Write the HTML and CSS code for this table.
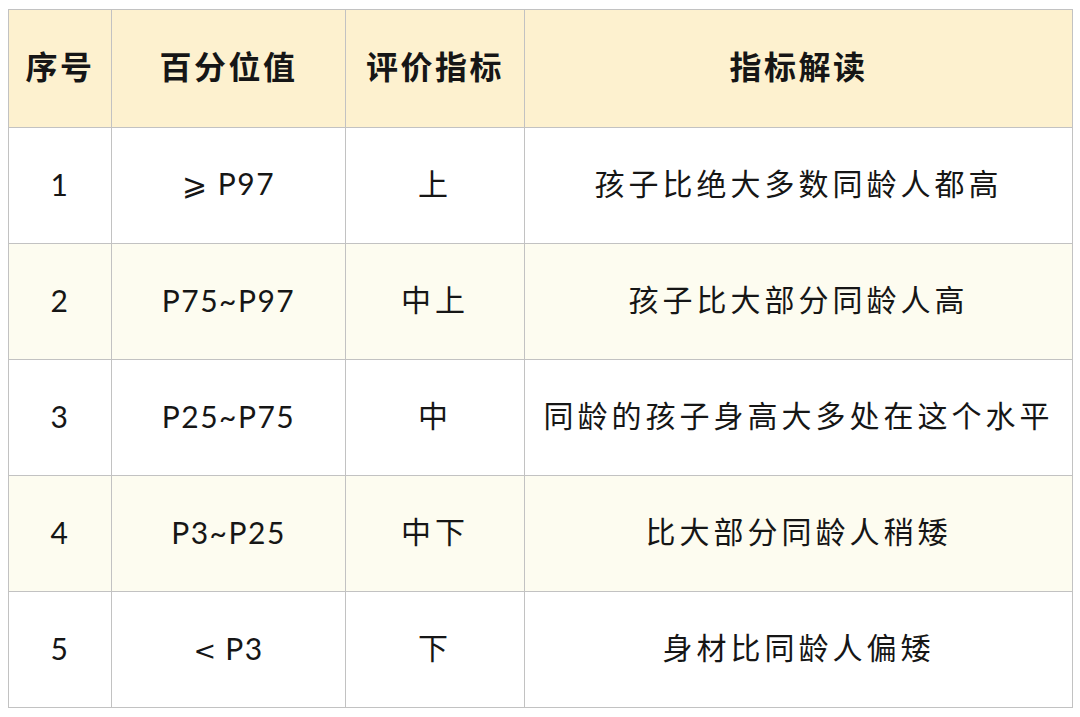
FILE: index.html
```html
<!DOCTYPE html>
<html lang="zh-CN">
<head>
<meta charset="utf-8">
<title>身高百分位</title>
<link rel="stylesheet" href="styles.css">
</head>
<body>
<table class="grid">
  <colgroup>
    <col class="c1"><col class="c2"><col class="c3"><col class="c4">
  </colgroup>
  <thead>
    <tr class="head">
      <th>序号</th><th>百分位值</th><th>评价指标</th><th>指标解读</th>
    </tr>
  </thead>
  <tbody>
    <tr class="row">
      <td class="num">1</td><td class="num">⩾ P97</td><td>上</td><td>孩子比绝大多数同龄人都高</td>
    </tr>
    <tr class="row alt">
      <td class="num">2</td><td class="num">P75~P97</td><td>中上</td><td>孩子比大部分同龄人高</td>
    </tr>
    <tr class="row">
      <td class="num">3</td><td class="num">P25~P75</td><td>中</td><td>同龄的孩子身高大多处在这个水平</td>
    </tr>
    <tr class="row alt">
      <td class="num">4</td><td class="num">P3~P25</td><td>中下</td><td>比大部分同龄人稍矮</td>
    </tr>
    <tr class="row">
      <td class="num">5</td><td class="num"><span class="sym">&lt;</span> P3</td><td>下</td><td>身材比同龄人偏矮</td>
    </tr>
  </tbody>
</table>
</body>
</html>
```

FILE: styles.css
```css
html, body {
  margin: 0;
  padding: 0;
  background: #ffffff;
}
body {
  padding: 9px 8px 0 8px;
  font-family: "Noto Sans CJK SC", "Noto Sans", sans-serif;
  color: #161616;
}
.grid {
  border-collapse: collapse;
  table-layout: fixed;
  width: 1064px;
}
.c1 { width: 103px; }
.c2 { width: 234px; }
.c3 { width: 179px; }
.c4 { width: 548px; }
.grid th,
.grid td {
  border: 1px solid #c2c2c2;
  text-align: center;
  vertical-align: middle;
  padding: 0 0 8px 0;
  white-space: nowrap;
}
.head {
  height: 118px;
  background: #fdf1cf;
}
.head th {
  font-size: 32px;
  font-weight: 700;
  letter-spacing: 2.5px;
  color: #161616;
}
.row {
  height: 116px;
  background: #ffffff;
}
.row.alt {
  background: #fdfcf0;
}
.row td {
  font-size: 30px;
  font-weight: 400;
  letter-spacing: 4px;
}
.row td.num {
  font-family: "Lato", "DejaVu Sans", "Noto Sans CJK SC", sans-serif;
  font-size: 30px;
  letter-spacing: 1.5px;
  padding-bottom: 4px;
}
.sym {
  font-family: "DejaVu Sans", sans-serif;
  font-size: 27px;
  letter-spacing: 0;
}
```
